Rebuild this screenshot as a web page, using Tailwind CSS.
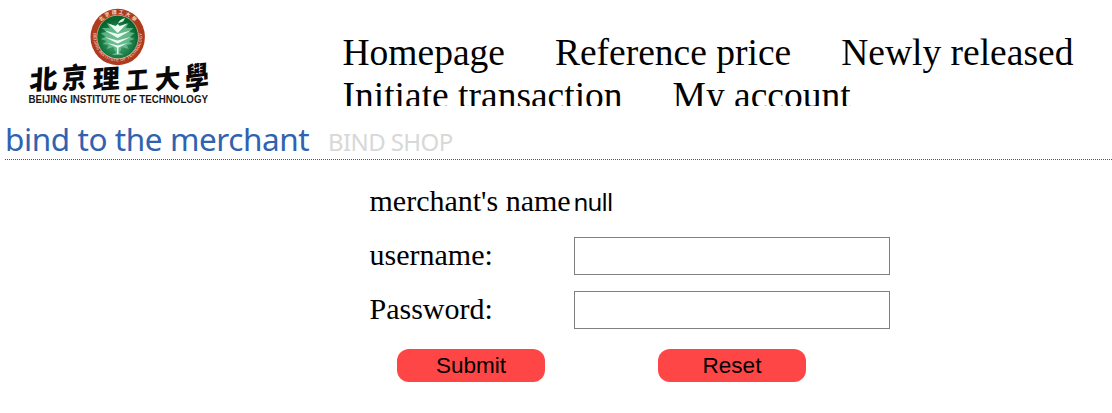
<!DOCTYPE html>
<html lang="en">
<head>
<meta charset="utf-8">
<title>Bind shop</title>
<script src="https://cdn.jsdelivr.net/npm/@tailwindcss/browser@4"></script>
</head>
<body class="bg-white text-black w-[1112px] h-[413px] overflow-hidden font-['Liberation_Serif',serif]">
<header class="flex h-[106px] overflow-hidden">
  <svg class="w-[342.5px] h-[110px] shrink-0" viewBox="0 0 342.5 110" role="img" aria-label="Beijing Institute of Technology">
    <defs>
      <radialGradient id="glow" cx="50%" cy="60%" r="50%"><stop offset="0" stop-color="#55b582"/><stop offset="1" stop-color="#06642f"/></radialGradient>
      <path id="topArc" d="M96.2 35.500a21.5 21.5 0 0 1 43 0"/>
      <path id="lowArc" d="M93.6 32a24.4 25.4 0 1 0 48.2 0"/>
    </defs>
    <ellipse cx="117.7" cy="37" rx="27.2" ry="28.2" fill="#b03a1c"/>
    <ellipse cx="117.7" cy="37" rx="20.8" ry="21.8" fill="url(#glow)" stroke="#cdb795" stroke-width=".8"/>
    <text font-family="Noto Sans CJK SC, sans-serif" font-size="5" font-weight="700" fill="#f0d8cb"><textPath href="#topArc" startOffset="50%" text-anchor="middle" textLength="38">北京理工大學</textPath></text>
    <text font-family="Liberation Sans, sans-serif" font-size="4.2" font-weight="700" fill="#e5b9a8"><textPath href="#lowArc" startOffset="50%" text-anchor="middle" textLength="84">BEIJING INSTITUTE OF TECHNOLOGY</textPath></text>
    <path d="M117.700 27l-11-4 3 5-8 0 5 4-6 1 5 4-5 2 6 2-4 3 6 1-2 4 7-2 1 4 2 1-5 3h12l-5-3 2-1 1-4 7 2-2-4 6-1-4-3 6-2-5-2 5-4-6-1 5-4h-8l3-5z" fill="#74c698" opacity=".75"/>
    <path d="M117.700 33l-9.500-9.500 7.500 2.500 2-2 2 2 7.500-2.500zM117.700 38l-13-7.500 13 3.500 13-3.500zM117.700 43.500l-13-6.500 13 3.500 13-3.500zM117.700 48l-10-5 10 2.500 10-2.500zM117 46h1.400v8h-1.400z" fill="#effcf3"/>
    <path d="M118 23.500q1-4 7-5.500-1 4-5 4.500z" fill="#d8eedc"/>
    <g font-family="Noto Sans CJK SC, sans-serif" font-weight="900" font-size="26" fill="#080808" text-anchor="middle">
      <text transform="translate(43 89) rotate(-5) skewX(-8) scale(1.08 1)">北</text>
      <text transform="translate(74 88) rotate(-5) skewX(-8) scale(.96 1.08)">京</text>
      <text transform="translate(106 88.5) rotate(-4) skewX(-6) scale(1.04 1)">理</text>
      <text transform="translate(137 89) rotate(-4) skewX(-6) scale(.88 .95)">工</text>
      <text transform="translate(167.500 88.5) rotate(-5) skewX(-6) scale(.98 1)">大</text>
      <text transform="translate(197 89) rotate(-7) skewX(-6) scale(.92 1.18)">學</text>
    </g>
    <text x="28.500" y="102.500" font-family="Liberation Sans, sans-serif" font-size="10" font-weight="700" fill="#161616" textLength="179.500" lengthAdjust="spacingAndGlyphs">BEIJING INSTITUTE OF TECHNOLOGY</text>
  </svg>
  <nav class="flex flex-wrap content-start gap-x-[50px] pt-[31px] w-[769px] text-[37.5px] leading-[43px] whitespace-nowrap">
    <a>Homepage</a><a>Reference price</a><a>Newly released</a><a>Initiate transaction</a><a>My account</a>
  </nav>
</header>
<h1 class="ml-[5px] h-[54px] flex items-baseline border-b border-dotted border-[#555] pt-[11px] font-['Noto_Sans',sans-serif] whitespace-nowrap">
  <span class="w-[323px] text-[31.5px] leading-[44px] tracking-[-0.42px] text-[#2f62b0]">bind to the merchant</span>
  <span class="text-[24px] leading-[44px] tracking-[-0.6px] text-[#d8d8d8]">BIND SHOP</span>
</h1>
<form class="ml-[369.5px] pt-[15px] w-[540px]">
  <div class="h-[54px] flex items-center text-[30px]"><label class="w-[204px] shrink-0 pb-[3px]">merchant's name</label><span class="font-['Noto_Sans',sans-serif] text-[24px] tracking-[-0.8px]">null</span></div>
  <div class="h-[54px] flex items-center text-[30px]"><label class="w-[204px] shrink-0 pb-[3px]">username:</label><input class="w-[316px] h-[38px] border border-[#808080]"></div>
  <div class="h-[54px] flex items-center text-[30px]"><label class="w-[204px] shrink-0 pb-[3px]">Password:</label><input type="password" class="w-[316px] h-[38px] border border-[#808080]"></div>
  <div class="flex gap-[113px] ml-[27.5px] mt-3 font-['Liberation_Sans',sans-serif] text-[22.5px]">
    <button type="button" class="w-[148px] h-[33px] rounded-[12px] bg-[#ff4646] pb-px">Submit</button>
    <button type="button" class="w-[148px] h-[33px] rounded-[12px] bg-[#ff4646] pb-px">Reset</button>
  </div>
</form>
</body>
</html>
